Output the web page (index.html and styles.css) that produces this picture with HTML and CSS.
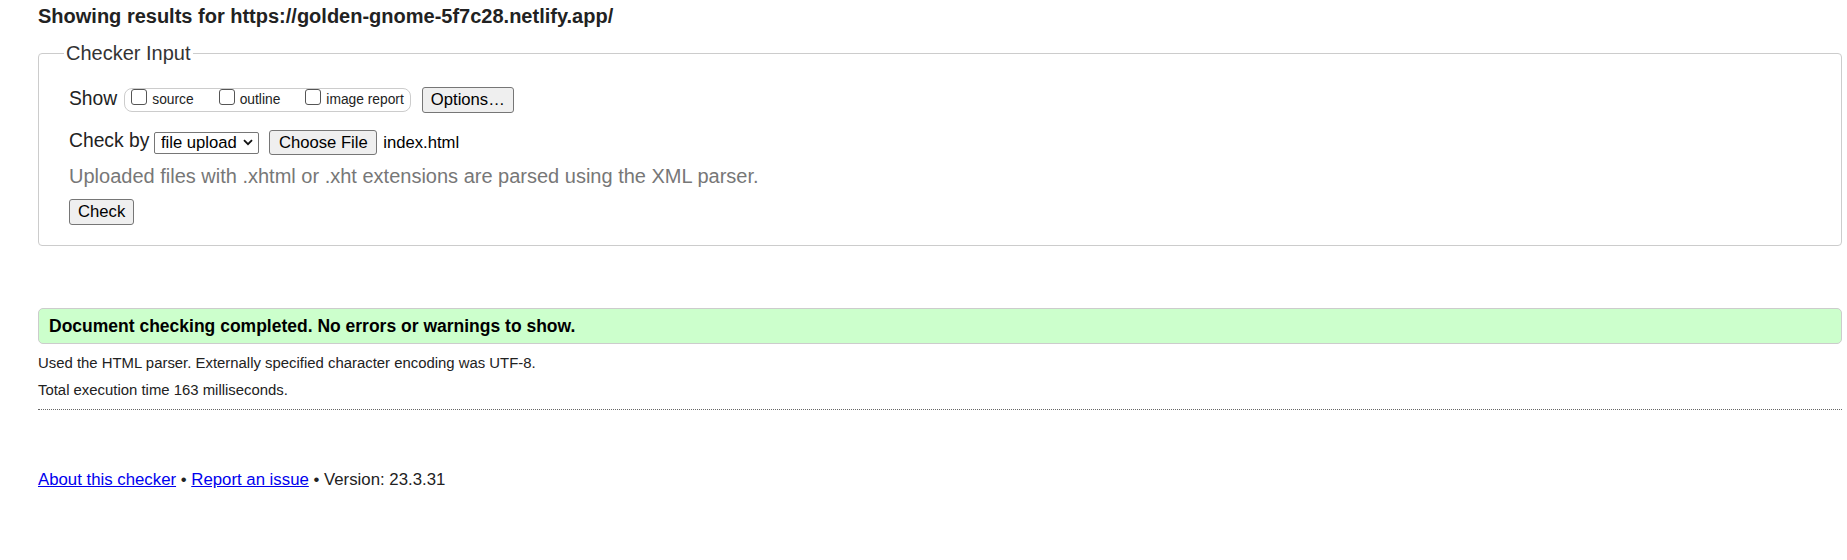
FILE: index.html
```html
<!DOCTYPE html>
<html lang="en">
<head>
<meta charset="utf-8">
<title>Showing results for https://golden-gnome-5f7c28.netlify.app/ - Nu Html Checker</title>
<link rel="stylesheet" href="styles.css">
</head>
<body>
<h2 class="heading">Showing results for https://golden-gnome-5f7c28.netlify.app/</h2>
<form class="checker">
  <fieldset class="checker-input">
    <legend class="legend">Checker Input</legend>
    <div class="row row-show">
      <span class="row-label label-show">Show</span>
      <span class="toggles">
        <label class="toggle"><input type="checkbox" class="cb"><span class="toggle-text">source</span></label>
        <label class="toggle"><input type="checkbox" class="cb"><span class="toggle-text">outline</span></label>
        <label class="toggle"><input type="checkbox" class="cb"><span class="toggle-text">image report</span></label>
      </span>
      <button type="button" class="btn btn-options">Options…</button>
    </div>
    <div class="row row-checkby">
      <span class="row-label label-checkby">Check by</span>
      <span class="select-wrap">
        <select class="select"><option>file upload</option></select>
        <svg class="chev" width="10" height="7" viewBox="0 0 10 7" aria-hidden="true"><path d="M1 1.2 L5 5.2 L9 1.2" fill="none" stroke="#111" stroke-width="1.8"/></svg>
      </span>
      <button type="button" class="btn btn-file">Choose File</button>
      <span class="file-name">index.html</span>
    </div>
    <p class="hint">Uploaded files with .xhtml or .xht extensions are parsed using the XML parser.</p>
    <button type="button" class="btn btn-check">Check</button>
  </fieldset>
</form>
<div class="success">Document checking completed. No errors or warnings to show.</div>
<div class="details">
  <p class="detail">Used the HTML parser. Externally specified character encoding was UTF-8.</p>
  <p class="detail detail-last">Total execution time 163 milliseconds.</p>
</div>
<p class="footer"><a class="link" href="#">About this checker</a> • <a class="link" href="#">Report an issue</a> • Version: 23.3.31</p>
</body>
</html>
```
FILE: styles.css
```css
body {
  margin: 0;
  padding: 0 5px 0 38px;
  font-family: "Liberation Sans", Arial, sans-serif;
  color: #222;
  background: #fff;
}

.heading {
  margin: 0;
  padding-top: 4px;
  font-size: 20px;
  line-height: 24px;
  font-weight: bold;
  color: #222;
}

.checker {
  margin: 13.5px 0 0;
}

.checker-input {
  margin: 0;
  min-width: 0;
  border: 1px solid #ccc;
  border-radius: 4px;
  padding: 22.5px 10px 20px 30px;
}

.legend {
  font-size: 20px;
  line-height: 23px;
  padding: 0 2px;
  margin-left: -5px;
  color: #333;
}

.row {
  display: flex;
  align-items: center;
}

.row-show {
  height: 26px;
}

.row-checkby {
  height: 25px;
  margin-top: 17px;
}

.row-label {
  font-size: 19.3px;
  line-height: 23px;
  color: #222;
  margin-bottom: 4px;
}

.label-show {
  margin-right: 7px;
}

.label-checkby {
  margin-right: 5px;
}

.toggles {
  display: inline-flex;
  align-items: center;
  height: 22px;
  border: 1px solid #ccc;
  border-radius: 8px;
  padding: 0 6px;
}

.toggle {
  display: flex;
  align-items: center;
  margin-right: 25px;
}

.toggle:last-child {
  margin-right: 0;
}

.cb {
  appearance: none;
  -webkit-appearance: none;
  box-sizing: border-box;
  width: 16px;
  height: 16px;
  margin: 0 5px 6px 0;
  border: 1px solid #555;
  border-radius: 3px;
  background: #fff;
}

.toggle-text {
  font-size: 13.8px;
  line-height: 16px;
  color: #222;
}

.btn {
  font-family: "Liberation Sans", Arial, sans-serif;
  font-size: 16.67px;
  line-height: 20px;
  color: #000;
  background: #efefef;
  border: 1px solid #767676;
  border-radius: 3px;
  padding: 2px 8px;
  margin: 0;
}

.btn-options {
  margin-left: 11px;
}

.select-wrap {
  position: relative;
  display: inline-block;
  height: 22px;
}

.select {
  appearance: none;
  -webkit-appearance: none;
  box-sizing: border-box;
  width: 105px;
  height: 22px;
  margin: 0;
  padding: 0 0 0 5.5px;
  border: 1px solid #767676;
  border-radius: 2px;
  background: #fff;
  color: #000;
  font-family: "Liberation Sans", Arial, sans-serif;
  font-size: 16.67px;
}

.chev {
  position: absolute;
  right: 6px;
  top: 7.5px;
  pointer-events: none;
}

.btn-file {
  margin-left: 10px;
  padding: 1.5px 8.5px;
}

.file-name {
  margin-left: 6px;
  font-size: 16.67px;
  line-height: 20px;
  color: #000;
}

.hint {
  margin: 9.5px 0 0;
  font-size: 20px;
  line-height: 23px;
  color: #777;
}

.btn-check {
  display: block;
  margin-top: 11.5px;
}

.success {
  margin-top: 62px;
  border: 1px solid #ccc;
  border-radius: 5px;
  background: #ccffcc;
  padding: 0 10px;
  font-size: 17.5px;
  line-height: 34px;
  font-weight: bold;
  color: #000;
}

.details {
  padding: 10px 0 10px;
  border-bottom: 1px dotted #666;
}

.detail {
  margin: 0;
  font-size: 14.9px;
  line-height: 18px;
  color: #222;
}

.detail-last {
  margin-top: 9px;
}

.footer {
  margin: 60px 0 0;
  font-size: 16.8px;
  line-height: 20px;
  color: #222;
}

.link {
  color: #0000ee;
  text-decoration: underline;
}
```
